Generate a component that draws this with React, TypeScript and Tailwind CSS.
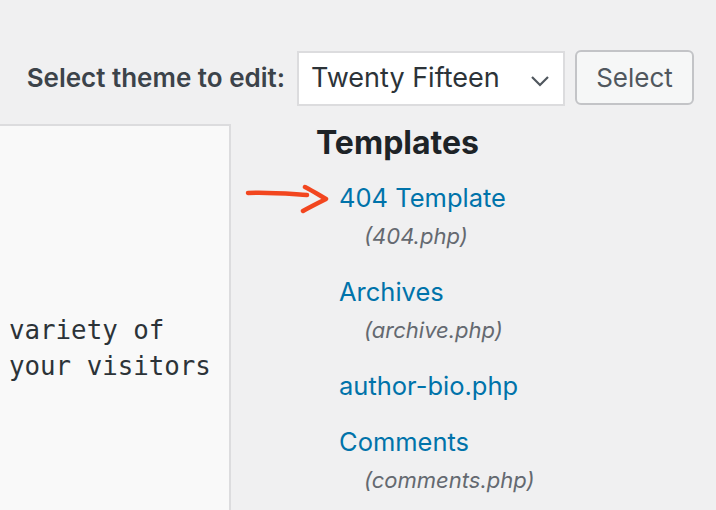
import React from 'react';

const templates = [
  { name: '404 Template', file: '(404.php)', arrow: true },
  { name: 'Archives', file: '(archive.php)' },
  { name: 'author-bio.php' },
  { name: 'Comments', file: '(comments.php)' },
];

function Arrow() {
  return (
    <svg width="86" height="32" viewBox="0 0 86 32" className="absolute left-[-94px] top-[5px]">
      <path d="M3 9 C 25 8, 45 10, 62 11" stroke="#f2461f" strokeWidth="4.5" fill="none" strokeLinecap="round" />
      <path d="M60 3 C 68 7, 74 11, 81 15 C 73 19, 65 23, 58 27" stroke="#f2461f" strokeWidth="4.5" fill="none" strokeLinecap="round" strokeLinejoin="round" />
    </svg>
  );
}

export default function App() {
  return (
    <div className="w-[716px] h-[510px] overflow-hidden bg-[#f0f0f1] font-['Inter',sans-serif]">
      {/* theme picker */}
      <div className="flex items-center justify-end pt-[49px] pr-[22px] h-[105px]">
        <span className="text-[26px] font-semibold text-[#3c434a] mr-[12px]">Select theme to edit:</span>
        <div className="relative w-[268px] h-[55px] bg-white border-2 border-[#dcdcde] flex items-center pl-[12px] mt-[2px]">
          <span className="text-[27px] text-[#2c3338]">Twenty Fifteen</span>
          <svg width="20" height="12" viewBox="0 0 20 12" className="absolute right-[13px] top-[22px]">
            <path d="M2 2 L10 10 L18 2" stroke="#50575e" strokeWidth="2.2" fill="none" />
          </svg>
        </div>
        <button className="ml-[10px] w-[119px] h-[55px] rounded-[6px] border-2 border-[#c3c4c7] bg-[#f6f7f7] text-[26px] text-[#50575e]">
          Select
        </button>
      </div>

      <div className="flex">
        {/* editor */}
        <div className="w-[231px] h-[400px] mt-[19px] bg-[#f9f9f9] border-t-2 border-r-2 border-[#dcdcde] font-['DejaVu_Sans_Mono',monospace] text-[25.8px] leading-[36px] text-[#2c3338] pl-[9px] pt-[186px] whitespace-pre">
          <div>variety of</div>
          <div>your visitors</div>
        </div>

        {/* templates list */}
        <div className="pl-[85px] pt-[18px]">
          <h2 className="text-[32px] font-bold text-[#1d2327] leading-[40px]">Templates</h2>
          <ul className="mt-[16px] pl-[23px]">
            {templates.map((t) => (
              <li key={t.name} className="mb-[18px]">
                <div className="relative text-[25.5px] leading-[38px] text-[#0073aa]">
                  {t.arrow && <Arrow />}
                  {t.name}
                </div>
                {t.file && (
                  <div className="pl-[25px] text-[22px] leading-[38px] italic text-[#646970]">{t.file}</div>
                )}
              </li>
            ))}
          </ul>
        </div>
      </div>
    </div>
  );
}
